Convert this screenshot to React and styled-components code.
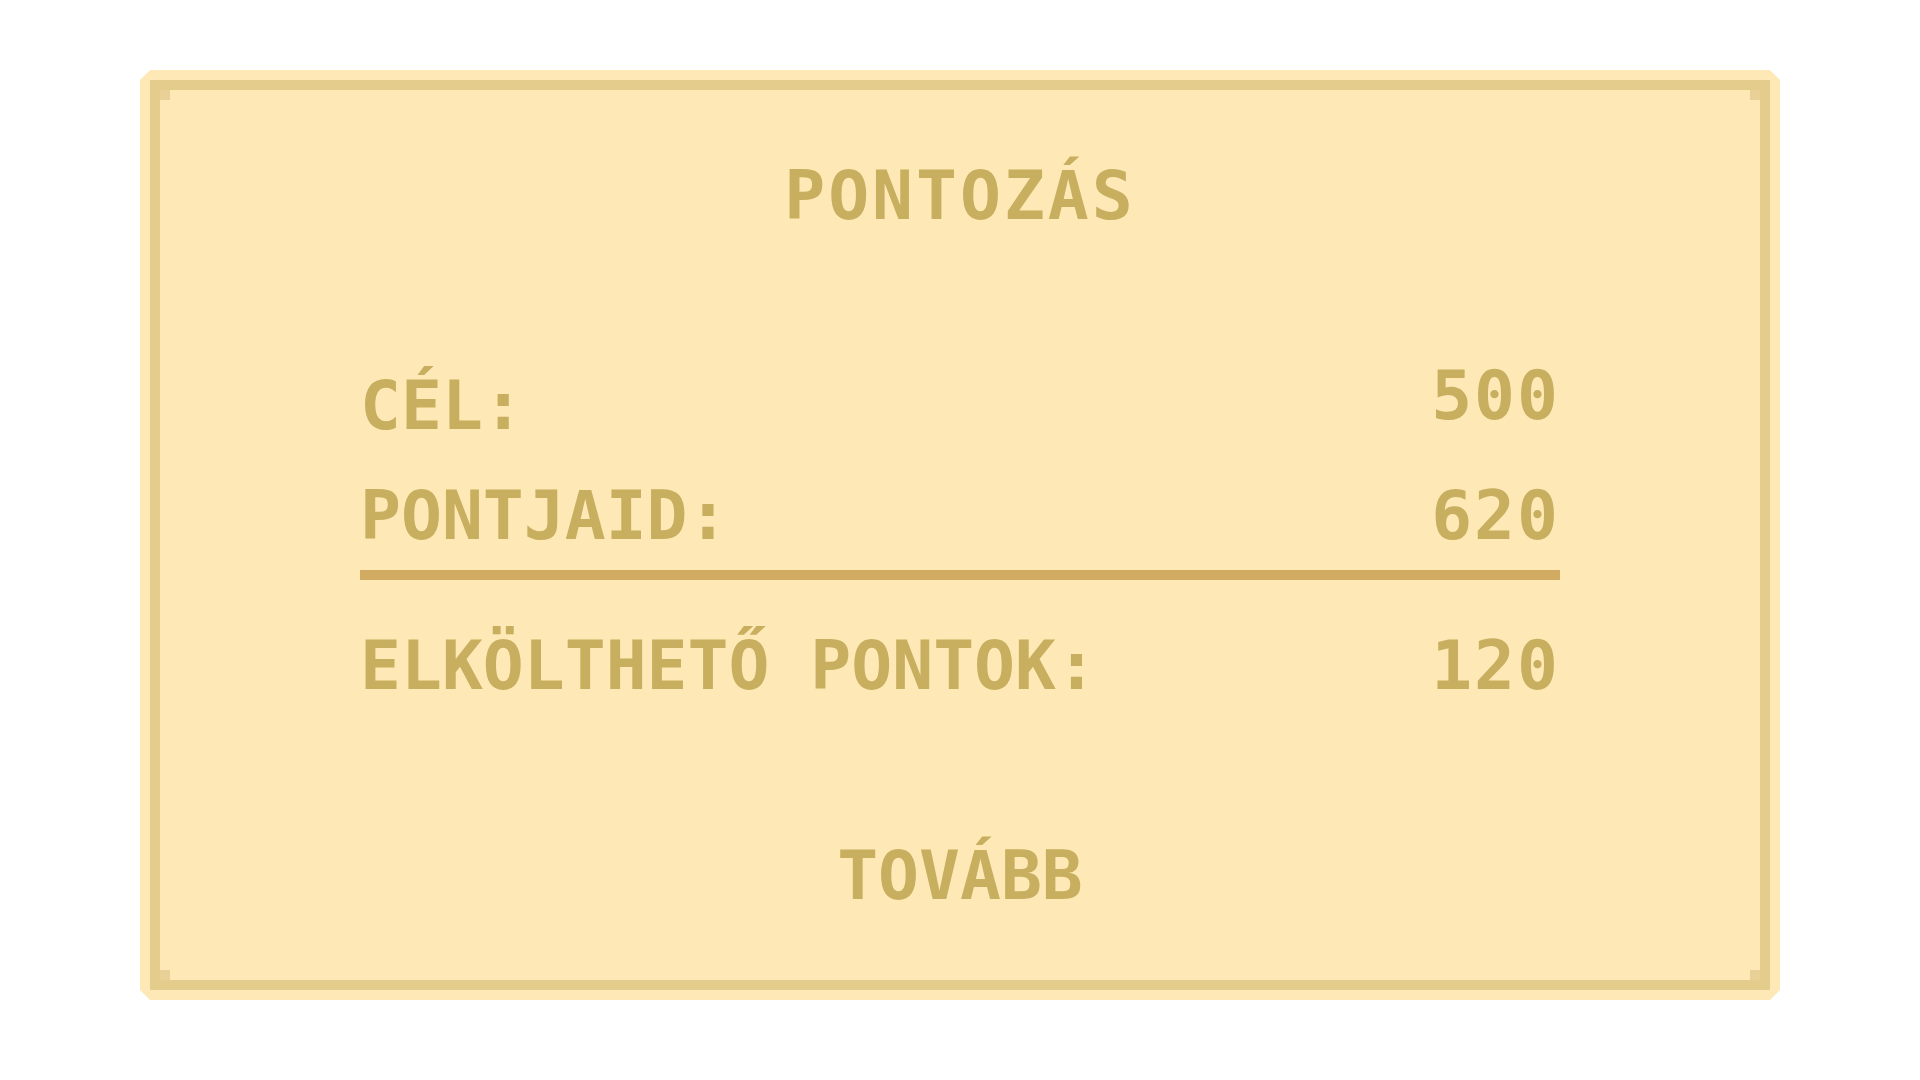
import styled, { createGlobalStyle } from "styled-components";

const GlobalStyle = createGlobalStyle`
  html, body {
    margin: 0;
    padding: 0;
    background: #ffffff;
  }
  * {
    box-sizing: border-box;
  }
`;

const Page = styled.div`
  width: 1920px;
  height: 1080px;
  padding: 70px 140px;
  font-family: "DejaVu Sans Mono", "Liberation Mono", monospace;
  font-weight: bold;
  color: #c8ae5f;
`;

const Panel = styled.div`
  width: 1640px;
  padding: 10px;
  background: #fee9b6;
  clip-path: polygon(
    10px 0,
    calc(100% - 10px) 0,
    100% 10px,
    100% calc(100% - 10px),
    calc(100% - 10px) 100%,
    10px 100%,
    0 calc(100% - 10px),
    0 10px
  );
`;

const Frame = styled.div`
  position: relative;
  display: flex;
  flex-direction: column;
  align-items: center;
  padding: 72px 0 70px;
  border: 10px solid #e3cc8c;

  /* pixel corner dots */
  &::before {
    content: "";
    position: absolute;
    top: 0;
    left: 0;
    width: 10px;
    height: 10px;
    background: #e8d096;
    box-shadow: 1590px 0 0 #e8d096, 0 880px 0 #e8d096, 1590px 880px 0 #e8d096;
  }
`;

const Title = styled.h1`
  margin: 0;
  font-size: 68px;
  line-height: 68px;
  font-weight: bold;
  letter-spacing: 3px;
`;

const Sheet = styled.div`
  align-self: stretch;
  display: flex;
  flex-direction: column;
  padding: 0 200px;
  margin-top: 132px;
`;

const Row = styled.div`
  display: flex;
  justify-content: space-between;
  align-items: flex-start;
  margin-top: ${({ $gap }) => $gap || 0}px;
  font-size: 68px;
  line-height: 68px;
`;

const Label = styled.span`
  margin-top: ${({ $drop }) => ($drop ? 10 : 0)}px;
`;

const Value = styled.span`
  letter-spacing: 2px;
`;

const Divider = styled.div`
  height: 10px;
  margin-top: 20px;
  background: #d2ab62;
`;

const Button = styled.button`
  margin-top: 142px;
  padding: 0;
  border: none;
  background: none;
  font-family: inherit;
  font-weight: bold;
  font-size: 68px;
  line-height: 68px;
  color: inherit;
  cursor: pointer;
`;

const rows = [
  { label: "CÉL:", value: 500, gap: 0, drop: true },
  { label: "PONTJAID:", value: 620, gap: 42 },
];

export default function App() {
  return (
    <Page>
      <GlobalStyle />
      <Panel>
        <Frame>
          <Title>PONTOZÁS</Title>
          <Sheet>
            {rows.map((r) => (
              <Row key={r.label} $gap={r.gap}>
                <Label $drop={r.drop}>{r.label}</Label>
                <Value>{r.value}</Value>
              </Row>
            ))}
            <Divider />
            <Row $gap={52}>
              <Label>ELKÖLTHETŐ PONTOK:</Label>
              <Value>120</Value>
            </Row>
          </Sheet>
          <Button>TOVÁBB</Button>
        </Frame>
      </Panel>
    </Page>
  );
}
